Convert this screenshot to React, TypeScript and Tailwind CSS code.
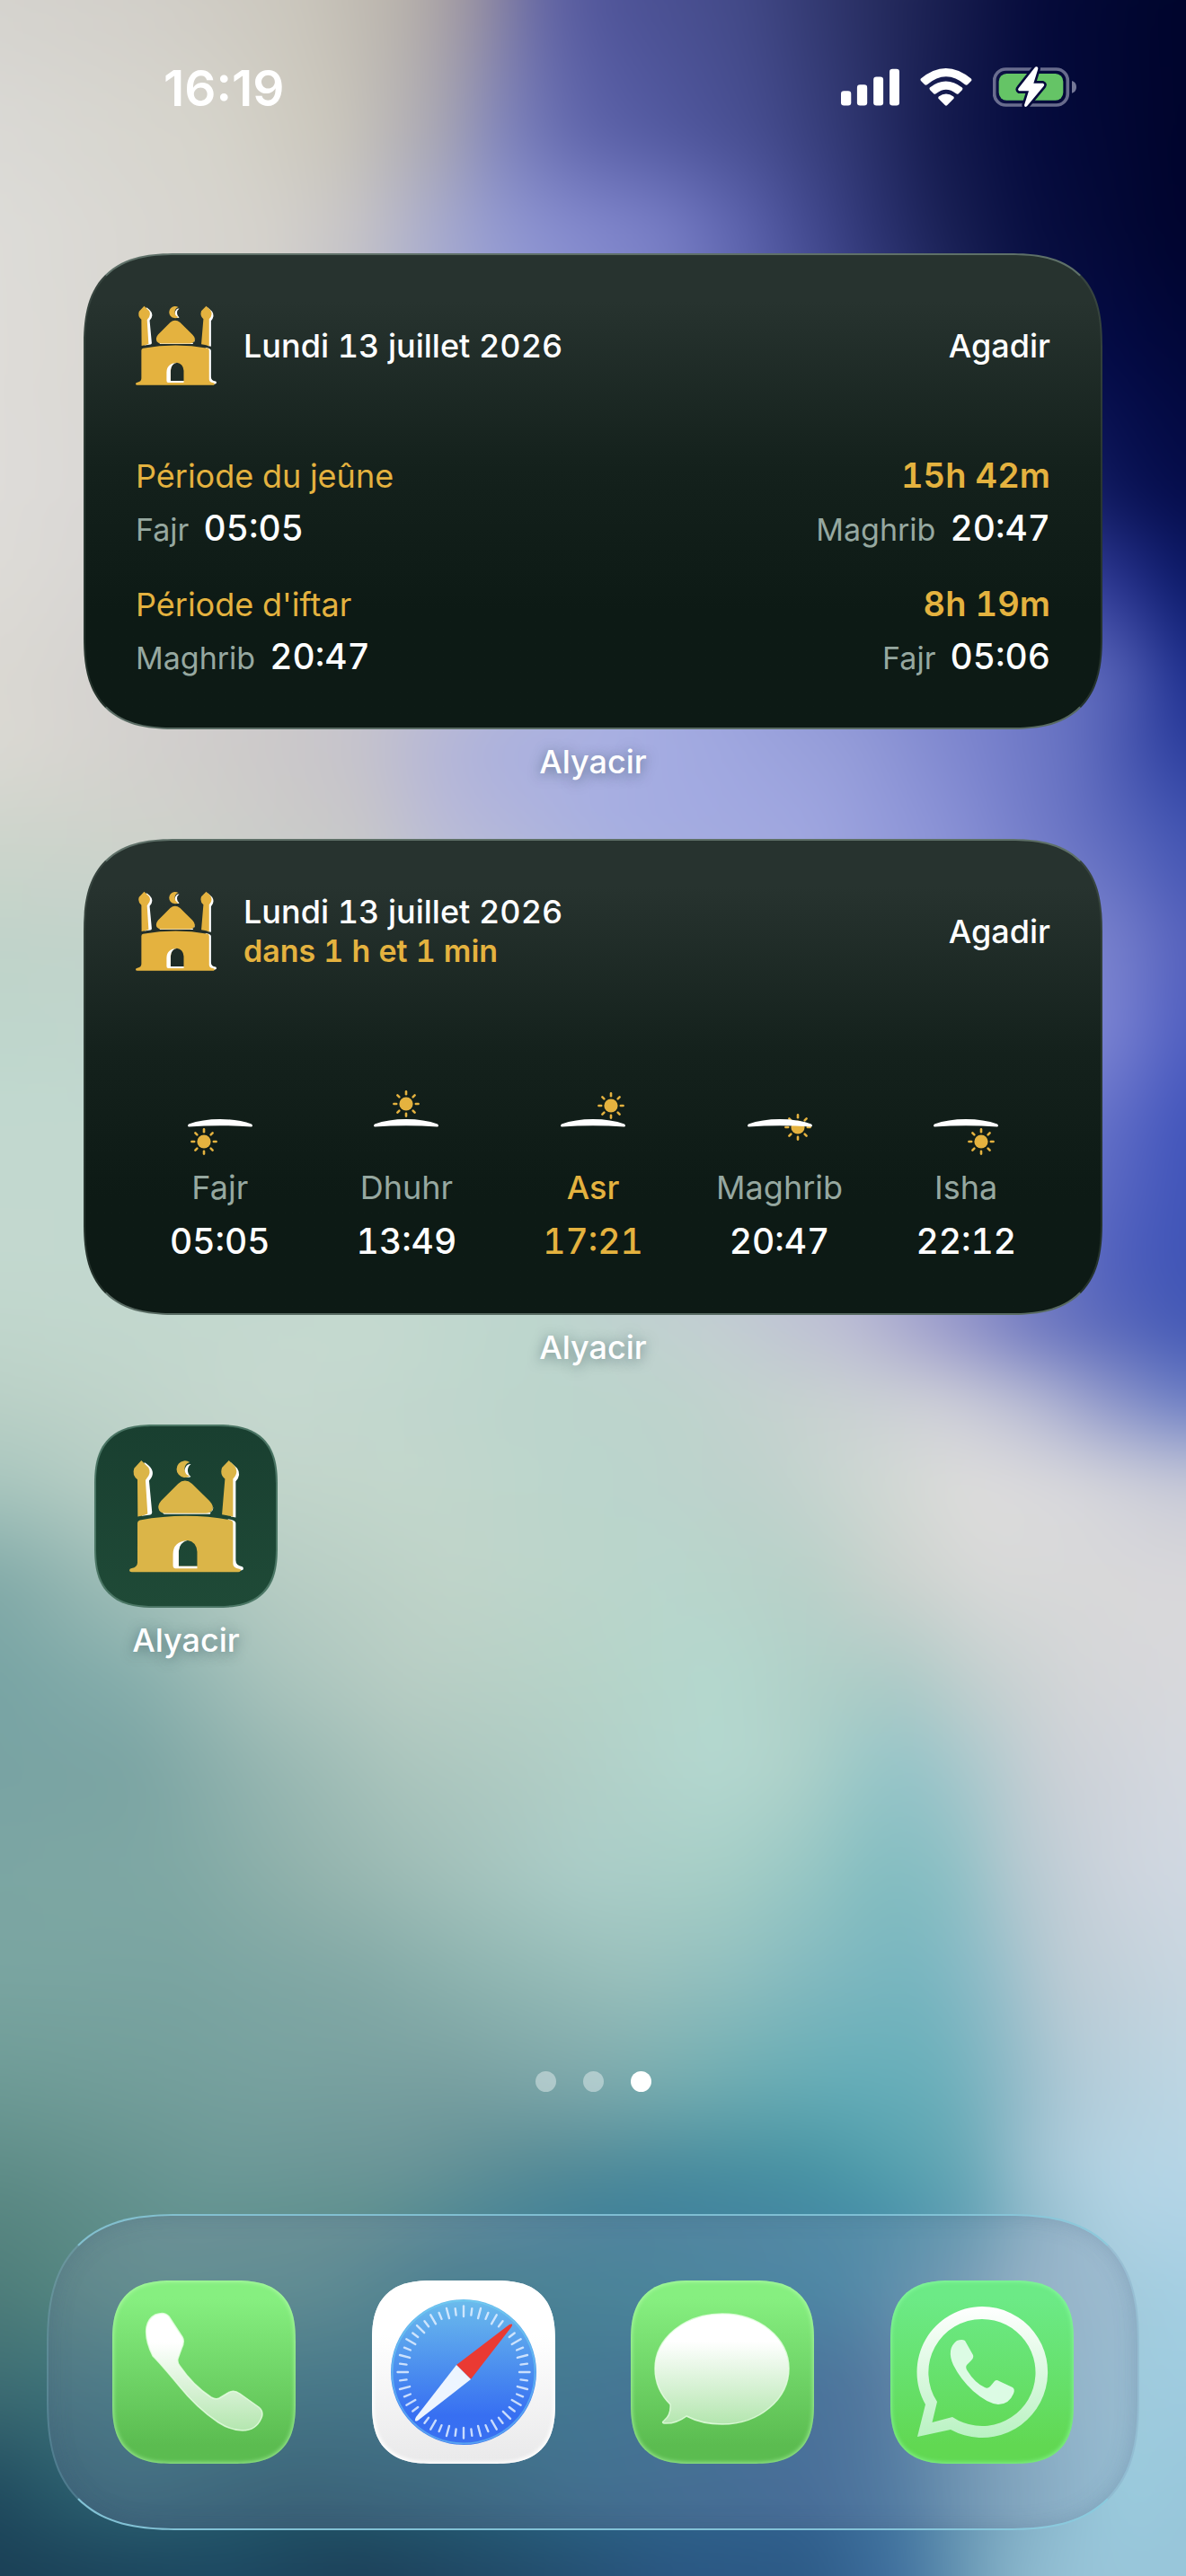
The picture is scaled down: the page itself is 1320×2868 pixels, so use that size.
import type { ReactNode } from "react";
import { clsx } from "clsx";

type Stop = [x: number, color: string];

interface MeshRow {
  y: number;
  stops: Stop[];
}

interface Prayer {
  name: string;
  time: string;
  sun: [number, number];
  isNext?: boolean;
}

interface Period {
  title: string;
  duration: string;
  from: { name: string; time: string };
  to: { name: string; time: string };
}

// Wallpaper colours, row by row. Neighbouring rows are blended into each other.
const meshRows: MeshRow[] = [
  { y: 0, stops: [[0, "#d5d3ce"], [165, "#d2cfc9"], [330, "#cbc7bd"], [450, "#b9b3ab"], [530, "#9a92a0"], [600, "#6668a6"], [670, "#50559a"], [825, "#434a88"], [990, "#242a5c"], [1155, "#050a3a"], [1320, "#00052c"]] },
  { y: 150, stops: [[0, "#dad9d5"], [240, "#d6d4cb"], [380, "#cac6bb"], [490, "#a8a6b2"], [560, "#7f84bd"], [650, "#5f65ab"], [740, "#5259a0"], [850, "#454c8e"], [950, "#2f3670"], [1040, "#161c50"], [1150, "#050b3e"], [1320, "#00042c"]] },
  { y: 260, stops: [[0, "#dddcd8"], [300, "#d5d2cc"], [400, "#c5c3c6"], [480, "#a9acce"], [560, "#9299d2"], [640, "#868cd0"], [740, "#7a80c8"], [820, "#6067b2"], [900, "#444b92"], [980, "#2b3270"], [1060, "#181f52"], [1150, "#080e40"], [1320, "#00042e"]] },
  { y: 400, stops: [[0, "#dedcd8"], [300, "#d5d2cc"], [600, "#9299d2"], [900, "#5259a0"], [1150, "#0a1248"], [1230, "#040b48"], [1320, "#02083a"]] },
  { y: 550, stops: [[0, "#dedcd9"], [400, "#d0cdcc"], [700, "#9299d2"], [1000, "#5c66b8"], [1235, "#0c165a"], [1320, "#050c4a"]] },
  { y: 650, stops: [[0, "#dddbd6"], [400, "#cbc8cc"], [700, "#a0a8e0"], [1100, "#5e69bc"], [1240, "#2a3592"], [1320, "#0c1a68"]] },
  { y: 750, stops: [[0, "#dad8d2"], [400, "#c8c5cb"], [700, "#a8afe1"], [1100, "#7881cc"], [1240, "#5864b8"], [1320, "#1c2d8c"]] },
  { y: 830, stops: [[0, "#dbd9d3"], [300, "#ccc9c9"], [400, "#c5c3cc"], [480, "#b6b7d6"], [560, "#aab0de"], [660, "#a9b0e2"], [800, "#a0a8e0"], [950, "#949cd8"], [1100, "#7881cc"], [1200, "#6470c0"], [1260, "#4554ae"], [1320, "#2a3c9c"]] },
  { y: 920, stops: [[0, "#cfd5cc"], [200, "#d0d1cb"], [400, "#c8c6c8"], [500, "#b8b9d8"], [680, "#a6aee2"], [900, "#9fa6e0"], [1050, "#8a92d6"], [1200, "#6671c2"], [1320, "#3f52b0"]] },
  { y: 1050, stops: [[0, "#c0d3c9"], [400, "#c6d3cf"], [900, "#a4abdc"], [1240, "#7780cc"], [1320, "#5561bc"]] },
  { y: 1150, stops: [[0, "#bed6cc"], [500, "#c6d3cf"], [1000, "#a4abdc"], [1235, "#7a82d2"], [1320, "#4f5ec0"]] },
  { y: 1250, stops: [[0, "#c2d9d0"], [600, "#c2d5cf"], [1000, "#a4abdc"], [1240, "#5f6cc6"], [1320, "#4154bb"]] },
  { y: 1400, stops: [[0, "#c3d8cf"], [600, "#bed5cd"], [900, "#bcc0d6"], [1100, "#8a90ca"], [1240, "#4f5fbd"], [1320, "#3f54b6"]] },
  { y: 1480, stops: [[0, "#c0d6cc"], [400, "#c6dad0"], [600, "#bcd6cd"], [800, "#c4cfd2"], [950, "#bcbcd4"], [1050, "#9b9bcb"], [1150, "#6f78c0"], [1320, "#4459b5"]] },
  { y: 1560, stops: [[0, "#bad0c6"], [300, "#c6d8cf"], [600, "#bcd5cc"], [750, "#bdd3cc"], [900, "#c8d2d0"], [1050, "#cfd0d8"], [1150, "#b8bbd4"], [1230, "#9098ca"], [1320, "#6a7cc4"]] },
  { y: 1650, stops: [[0, "#a9c6be"], [200, "#c0d3c9"], [450, "#c3d7cc"], [660, "#bad5cc"], [850, "#bfd1cc"], [1000, "#d3d9d5"], [1080, "#dedddc"], [1200, "#d8d8dc"], [1320, "#c8cad8"]] },
  { y: 1760, stops: [[0, "#82aaa8"], [120, "#9cbcb6"], [300, "#b6ccc3"], [500, "#c0d4c9"], [750, "#b8d6cc"], [900, "#b8d0c8"], [1000, "#ccd2ce"], [1100, "#d8d9d8"], [1320, "#d9d8da"]] },
  { y: 1870, stops: [[0, "#78a4a4"], [150, "#86aeac"], [300, "#a8c3bc"], [450, "#b8cdc4"], [650, "#b6d3c8"], [800, "#b4d8ce"], [900, "#b0d0c8"], [1000, "#accac6"], [1100, "#c6d0d0"], [1200, "#d4d6d8"], [1320, "#d8d8dc"]] },
  { y: 1970, stops: [[0, "#79a3a3"], [150, "#7ba4a3"], [300, "#96b6b1"], [450, "#abc5bd"], [600, "#b0ccc4"], [800, "#b4d8d0"], [880, "#b0d2ca"], [940, "#9fcac8"], [1010, "#93c3c8"], [1080, "#aac8cc"], [1170, "#cbd0d6"], [1320, "#d5d9e0"]] },
  { y: 2090, stops: [[0, "#7ca6a3"], [200, "#7fa8a4"], [350, "#93b3ad"], [500, "#a2c0ba"], [650, "#abcdc8"], [800, "#a6cec6"], [900, "#96c6c4"], [980, "#82bcc0"], [1060, "#8abfc4"], [1130, "#b4c8d0"], [1230, "#ccd3dc"], [1320, "#d0d8e2"]] },
  { y: 2200, stops: [[0, "#7aa5a1"], [200, "#7aa4a1"], [400, "#83a9a6"], [550, "#90b6b2"], [700, "#9ac0bc"], [820, "#90bfbf"], [920, "#80b8bf"], [1020, "#76b5bf"], [1100, "#90bcc8"], [1180, "#bccbd4"], [1320, "#c8d6e0"]] },
  { y: 2320, stops: [[0, "#6e9b96"], [300, "#77a19f"], [500, "#789fa0"], [650, "#7da8ab"], [750, "#76adb0"], [850, "#6aacb3"], [950, "#64adb8"], [1050, "#6aafba"], [1120, "#8cb8c6"], [1200, "#b2cbd8"], [1320, "#bdd6e3"]] },
  { y: 2420, stops: [[0, "#5e8c87"], [250, "#6d9997"], [450, "#6a9497"], [600, "#548994"], [750, "#488a9c"], [900, "#4692a2"], [1000, "#55a0ae"], [1080, "#68a8b6"], [1150, "#a0c2d2"], [1220, "#b2d2e2"], [1320, "#b5d5e6"]] },
  { y: 2470, stops: [[0, "#578580"], [200, "#649391"], [400, "#60918f"], [560, "#4c8698"], [680, "#40809a"], [850, "#4485a0"], [980, "#468fa8"], [1080, "#60a0b4"], [1150, "#90bbcc"], [1240, "#b0d2e3"], [1320, "#b0d3e6"]] },
  { y: 2550, stops: [[0, "#4e7d7a"], [160, "#5b9188"], [350, "#558d8c"], [500, "#397c88"], [700, "#388494"], [930, "#3d87a5"], [1060, "#6d9fb6"], [1140, "#9dc0d0"], [1240, "#a2cadb"], [1320, "#a4cfe3"]] },
  { y: 2650, stops: [[0, "#3f6e74"], [160, "#3c7a80"], [350, "#35737e"], [600, "#2e7488"], [800, "#326c92"], [950, "#3c6d97"], [1060, "#6c97b3"], [1140, "#8fb9cb"], [1240, "#a0cadb"], [1320, "#9fcce0"]] },
  { y: 2780, stops: [[0, "#1f4a5e"], [60, "#28596a"], [150, "#2e6474"], [330, "#235768"], [500, "#265e74"], [650, "#2d6787"], [900, "#356493"], [1000, "#4378a0"], [1060, "#6494b2"], [1130, "#80acc3"], [1240, "#9bccde"], [1320, "#98c6da"]] },
  { y: 2868, stops: [[0, "#1a3f55"], [250, "#1c4862"], [400, "#1c3f58"], [600, "#224c6c"], [750, "#2a5682"], [900, "#2c5a86"], [1000, "#4070a0"], [1050, "#5a8aab"], [1120, "#85b2c8"], [1200, "#98c4d8"], [1320, "#98c6da"]] },
];

const periods: Period[] = [
  {
    title: "Période du jeûne",
    duration: "15h 42m",
    from: { name: "Fajr", time: "05:05" },
    to: { name: "Maghrib", time: "20:47" },
  },
  {
    title: "Période d'iftar",
    duration: "8h 19m",
    from: { name: "Maghrib", time: "20:47" },
    to: { name: "Fajr", time: "05:06" },
  },
];

const prayers: Prayer[] = [
  { name: "Fajr", time: "05:05", sun: [22, 61] },
  { name: "Dhuhr", time: "13:49", sun: [40, 19] },
  { name: "Asr", time: "17:21", sun: [60, 21], isNext: true },
  { name: "Maghrib", time: "20:47", sun: [60, 45] },
  { name: "Isha", time: "22:12", sun: [57, 61] },
];

function Wallpaper() {
  return (
    <svg
      aria-hidden="true"
      className="absolute inset-0 -z-10 h-full w-full"
      preserveAspectRatio="none"
      viewBox="0 0 1320 2868"
    >
      <defs>
        <filter
          id="soften"
          colorInterpolationFilters="sRGB"
          filterUnits="userSpaceOnUse"
          x="-200"
          y="-200"
          width="1720"
          height="3268"
        >
          <feGaussianBlur stdDeviation="28" />
        </filter>
        {meshRows.map((row, i) => {
          const previous = meshRows[i - 1]?.y ?? -200;
          return (
            <g key={row.y}>
              <linearGradient id={`row-${i}`} gradientUnits="userSpaceOnUse" x1="0" x2="1320" y1="0" y2="0">
                {row.stops.map(([x, color]) => (
                  <stop key={x} offset={x / 1320} stopColor={color} />
                ))}
              </linearGradient>
              <linearGradient id={`fade-${i}`} gradientUnits="userSpaceOnUse" x1="0" x2="0" y1={previous} y2={row.y}>
                <stop offset="0" stopColor="#000" />
                <stop offset="1" stopColor="#fff" />
              </linearGradient>
              <mask id={`mask-${i}`} maskUnits="userSpaceOnUse" x="-200" y={previous} width="1720" height={3268 - previous}>
                <rect x="-200" y={previous} width="1720" height={3268 - previous} fill={`url(#fade-${i})`} />
              </mask>
            </g>
          );
        })}
      </defs>
      <g filter="url(#soften)">
        {meshRows.map((row, i) => {
          const top = i === 0 ? -200 : meshRows[i - 1].y;
          return (
            <rect
              key={row.y}
              x="-200"
              y={top}
              width="1720"
              height={3068 - top}
              fill={`url(#row-${i})`}
              mask={i === 0 ? undefined : `url(#mask-${i})`}
            />
          );
        })}
      </g>
    </svg>
  );
}

function MosqueShape() {
  return (
    <>
      <path d="M200 166L224 190Q234 208 218 226L214 232L221 345Q204 352 188 354L187 230Q168 214 176 192Z" />
      <path d="M493 166L512 184Q528 206 507 228L507 355Q488 350 470 347L480 228Q462 214 470 190Z" />
      <path d="M362 172A28 28 0 1 0 362 218A24 24 0 0 1 362 172Z" />
      <path d="M323 244Q346 224 370 244L428 301Q446 320 436 334Q430 343 416 343H280Q266 343 260 334Q252 318 266 301Z" />
      <path
        fillRule="evenodd"
        d="M187 376Q187 368 195 366Q350 338 500 366Q507 368 507 376V512Q507 526 528 529Q536 531 532 536Q530 540 524 540H168Q160 540 160 534Q160 528 168 527Q187 523 187 508ZM325 520H387V472Q384 438 355 434Q325 436 325 476Z"
      />
    </>
  );
}

function MosqueIcon({ className, gold }: { className: string; gold: string }) {
  return (
    <svg aria-hidden="true" className={className} viewBox="160 164 382 380">
      <g fill="#fff">
        <path d="M210 173Q214 174 226 184Q250 208 226 234L236 340Q236 346 230 348L202 352L196 240Z" />
        <path d="M500 173L521 192Q536 214 516 236V357L500 354Z" />
        <path d="M366 178A26 26 0 0 0 366 220Q358 224 350 222L344 200Q350 176 366 178Z" />
        <path d="M270 340H432Q440 336 441 322L430 346H276Z" />
        <path d="M490 362Q516 366 516 376V500Q516 518 538 522Q544 526 540 532L530 536L500 528Z" />
      </g>
      <g fill={gold}>
        <MosqueShape />
      </g>
      <path d="M355 434Q306 438 306 480V518Q306 527 314 528H387V520H325V470Q328 440 355 434Z" fill="#fff" />
    </svg>
  );
}

function SunPosition({ sun: [x, y] }: { sun: [number, number] }) {
  return (
    <svg aria-hidden="true" className="h-20 w-20" viewBox="0 0 80 80">
      <g transform={`translate(${x} ${y})`} fill="#e4b23f" stroke="#e4b23f" strokeWidth="2.6" strokeLinecap="round">
        <circle r="7.6" stroke="none" />
        {[0, 45, 90, 135, 180, 225, 270, 315].map((angle) => (
          <path key={angle} d="M0 -10.8V-13.6" transform={`rotate(${angle})`} />
        ))}
      </g>
      <path d="M5 41.500Q20 36 40 36T75 41.500Q77 43.500 75 44.500Q40 42 5 44.500Q3 43.500 5 41.500Z" fill="#fff" />
    </svg>
  );
}

function StatusBar() {
  return (
    <header className="flex h-[196px] items-start justify-between pt-[66px] pr-[122px] pl-[182px]">
      <time className="text-[55px] leading-[64px] font-semibold">16:19</time>
      <div className="flex items-center gap-[23px] pt-[8px]">
        <svg aria-label="Réseau" className="h-[42px] w-[65px]" viewBox="110 76 196 126" fill="#fff">
          <rect x="110" y="152" width="34" height="49" rx="10" />
          <rect x="164" y="131" width="34" height="70" rx="10" />
          <rect x="219" y="104" width="33" height="97" rx="10" />
          <rect x="273" y="78" width="33" height="123" rx="10" />
        </svg>
        <svg aria-label="Wi-Fi" className="h-[42px] w-[58px]" viewBox="374 75 174 127" fill="#fff">
          <path d="M376 110Q460 40 545 110Q549 114 545 118L533 130Q529 133 525 130Q461 76 397 130Q393 133 389 130L377 118Q373 114 376 110Z" />
          <path d="M406 140Q460 98 515 140Q519 144 515 148L502 161Q498 163 494 160Q461 134 428 160Q424 163 420 161L407 148Q403 144 406 140Z" />
          <path d="M436 170Q461 153 486 170Q489 174 486 178L465 199Q461 203 457 199L436 178Q433 174 436 170Z" />
        </svg>
        <svg aria-label="Batterie en charge" className="h-[46px] w-[93px]" viewBox="615 71 279 138">
          <rect x="620" y="80" width="245" height="120" rx="38" fill="none" stroke="#8a8ca8" strokeOpacity="0.75" strokeWidth="11" />
          <path d="M879 119Q894 124 894 140T879 160Z" fill="#8a8ca8" fillOpacity="0.85" />
          <rect x="635" y="95" width="215" height="89" rx="26" fill="#65c466" />
          <path
            d="M762 72Q768 74 765 82L751 127H782Q790 130 784 138L729 204Q721 210 720 200L735 153H703Q696 149 702 142L755 75Q758 71 762 72Z"
            fill="#fff"
            stroke="#060b3c"
            strokeWidth="16"
            strokeLinejoin="round"
            paintOrder="stroke"
          />
        </svg>
      </div>
    </header>
  );
}

function Widget({ children }: { children: ReactNode }) {
  return (
    <section className="flex flex-col">
      <div className="flex h-[530px] flex-col rounded-[104px] border-2 border-x-[#5c6f66]/30 border-y-[#6d8077]/80 bg-linear-to-b from-[#27332f] from-10% via-[#14211c] via-45% to-[#0d1a15] to-75% bg-origin-border px-[46px] pt-[56px] [corner-shape:superellipse(1.4)]">
        {children}
      </div>
      <AppLabel className="mt-[12px]">Alyacir</AppLabel>
    </section>
  );
}

function AppLabel({ children, className }: { children: ReactNode; className?: string }) {
  return (
    <p
      className={clsx(
        "text-center text-[36px] leading-[48px] font-medium text-white [text-shadow:0_2px_14px_rgba(30,60,70,0.55)]",
        className,
      )}
    >
      {children}
    </p>
  );
}

function WidgetHeader({ countdown }: { countdown?: string }) {
  return (
    <div className="flex items-center px-[10px]">
      <MosqueIcon className="h-[90px] w-[90px]" gold="#e4b23f" />
      <div className="ml-[30px] flex-1">
        <h2 className="text-[36px] leading-[44px] font-medium">Lundi 13 juillet 2026</h2>
        {countdown ? (
          <p className="text-[34px] leading-[44px] font-semibold text-[#e4b23f]">{countdown}</p>
        ) : null}
      </div>
      <p className="text-[36px] leading-[44px] font-medium">Agadir</p>
    </div>
  );
}

function PeriodTime({ name, time }: { name: string; time: string }) {
  return (
    <span className="flex items-baseline gap-[16px]">
      <span className="text-[34px] text-[#96a8a0]">{name}</span>
      <span className="text-[39px] font-medium">{time}</span>
    </span>
  );
}

function FastingWidget() {
  return (
    <Widget>
      <WidgetHeader />
      <div className="mt-[70px] flex flex-col gap-[24px] px-[10px]">
        {periods.map((period) => (
          <div key={period.title}>
            <div className="flex items-baseline justify-between leading-[58px] text-[#e4b23f]">
              <h3 className="text-[36px]">{period.title}</h3>
              <p className="text-[38px] font-semibold">{period.duration}</p>
            </div>
            <div className="flex items-baseline justify-between leading-[58px]">
              <PeriodTime {...period.from} />
              <PeriodTime {...period.to} />
            </div>
          </div>
        ))}
      </div>
    </Widget>
  );
}

function PrayerWidget() {
  return (
    <Widget>
      <WidgetHeader countdown="dans 1 h et 1 min" />
      <ul className="mt-[128px] grid grid-cols-5">
        {prayers.map((prayer) => (
          <li
            key={prayer.name}
            className={clsx("flex flex-col items-center", prayer.isNext ? "text-[#e4b23f]" : "text-white")}
          >
            <SunPosition sun={prayer.sun} />
            <span
              className={clsx(
                "mt-[2px] text-[36px] leading-[60px]",
                prayer.isNext ? "font-medium" : "text-[#96a8a0]",
              )}
            >
              {prayer.name}
            </span>
            <time className="text-[39px] leading-[60px] font-medium">{prayer.time}</time>
          </li>
        ))}
      </ul>
    </Widget>
  );
}

function DockIcon({ label, className, children }: { label: string; className: string; children: ReactNode }) {
  return (
    <button
      aria-label={label}
      className={clsx(
        "h-[204px] w-[204px] rounded-[68px] bg-linear-to-b [corner-shape:superellipse(1.4)]",
        className,
      )}
      type="button"
    >
      <svg aria-hidden="true" className="h-full w-full" viewBox="0 0 204 204">
        {children}
      </svg>
    </button>
  );
}

function Dock() {
  const ticks = Array.from({ length: 48 }, (_, i) => i);

  return (
    <nav className="mx-[52px] mb-[51px] flex items-center justify-between rounded-[148px] border-2 border-t-[#8accdf]/80 border-r-[#8accdf]/20 border-b-[#8accdf]/90 border-l-[#8accdf]/20 bg-[rgba(130,140,170,0.25)] px-[71px] py-[72px] shadow-[inset_0_0_24px_rgba(60,90,120,0.25)] [corner-shape:superellipse(1.4)]">
      <DockIcon
        label="Téléphone"
        className="from-[#86ef80] from-10% to-[#5bbc50] to-90% shadow-[inset_0_0_5px_1px_rgba(190,255,180,0.7)]"
      >
        <defs>
          <linearGradient id="glyph" x1="0" x2="0" y1="0" y2="1">
            <stop offset="0.25" stopColor="#fff" />
            <stop offset="1" stopColor="#b4e6af" />
          </linearGradient>
        </defs>
        <path
          d="M48 38Q58 34 63 40L78 63Q81 68 77 76L73 87Q72 91 75 95Q90 117 110 130Q115 133 119 131L129 125Q135 121 142 126L163 141Q169 146 166 153Q160 167 145 167Q132 167 118 158Q94 142 74 117Q54 93 45 84Q36 66 38 52Q40 42 48 38Z"
          fill="url(#glyph)"
          stroke="#e8ffe5"
          strokeOpacity="0.8"
          strokeWidth="1.500"
        />
      </DockIcon>
      <DockIcon label="Safari" className="from-white from-30% to-[#e9e9ea] shadow-[inset_0_0_4px_2px_#fff]">
        <defs>
          <linearGradient id="dial" x1="0" x2="0" y1="0" y2="1">
            <stop offset="0" stopColor="#6cbcec" />
            <stop offset="0.5" stopColor="#4a8cef" />
            <stop offset="0.8" stopColor="#376ff2" />
            <stop offset="1" stopColor="#3a70f0" />
          </linearGradient>
        </defs>
        <circle cx="102" cy="102" r="81" fill="url(#dial)" />
        <circle cx="102" cy="102" r="79.500" fill="none" stroke="#74d4f4" strokeOpacity="0.5" strokeWidth="2" />
        <g stroke="#e2efff" strokeOpacity="0.85" strokeWidth="2.400" strokeLinecap="round">
          {ticks.map((i) => (
            <path
              key={i}
              d={i % 2 === 0 ? "M102 28.500V40" : "M102 30.500V38"}
              transform={`rotate(${i * 7.5} 102 102)`}
            />
          ))}
        </g>
        <path d="M94 94L153 49Q158 47 155 52L110 110Z" fill="#ea3a33" />
        <path d="M94 94L110 110L51 156Q46 158 49 152Z" fill="#edf5ff" />
      </DockIcon>
      <DockIcon
        label="Messages"
        className="from-[#86ef80] from-10% to-[#5bbc50] to-90% shadow-[inset_0_0_5px_1px_rgba(190,255,180,0.7)]"
      >
        <path
          d="M102 37C143 37 176 64 176 98S143 160 102 160Q79 160 62 151Q50 160 37 159Q34 158 37 156Q45 150 44 138Q27 121 27 98C27 64 60 37 102 37Z"
          fill="url(#glyph)"
          stroke="#e8ffe5"
          strokeOpacity="0.8"
          strokeWidth="1.500"
        />
      </DockIcon>
      <DockIcon
        label="WhatsApp"
        className="from-[#6cea86] from-10% to-[#61d852] to-90% shadow-[inset_0_0_5px_1px_rgba(150,255,170,0.7)]"
      >
        <defs>
          <linearGradient id="ring" x1="0" x2="0" y1="0" y2="1">
            <stop offset="0" stopColor="#fff" />
            <stop offset="1" stopColor="#b9f2c2" />
          </linearGradient>
        </defs>
        <path
          fillRule="evenodd"
          d="M102 29A73 73 0 1 1 67 166L30 174L39 138A73 73 0 0 1 102 29ZM102 43A59.500 59.500 0 0 0 52 135L46.500 158L69 152A59.500 59.500 0 1 0 102 43Z"
          fill="url(#ring)"
        />
        <path
          d="M74 67Q80 65 83 67L92 83Q93 86 90 89L85 94Q83 97 86 101Q94 114 105 119Q108 121 111 118L116 112Q118 110 121 112L136 119Q139 121 137 126Q132 138 120 138Q108 137 92 123Q78 110 70 94Q62 76 74 67Z"
          fill="#dcfbe4"
        />
      </DockIcon>
    </nav>
  );
}

export default function App() {
  return (
    <div className="relative isolate flex min-h-screen flex-col overflow-hidden font-['Inter','Liberation_Sans',sans-serif] text-white">
      <Wallpaper />
      <StatusBar />
      <main className="flex flex-1 flex-col px-[93px] pt-[86px] tabular-nums">
        <div className="flex flex-col gap-[62px]">
          <FastingWidget />
          <PrayerWidget />
        </div>
        <button className="mt-[62px] ml-[12px] w-[204px]" type="button">
          <span className="flex h-[204px] w-[204px] items-center justify-center rounded-[68px] border-2 border-[#5f8a7a]/70 bg-linear-to-b from-[#193f30] to-[#1f4a37] [corner-shape:superellipse(1.4)]">
            <MosqueIcon className="h-[127px] w-[127px]" gold="#dbb548" />
          </span>
          <AppLabel className="mt-[12px]">Alyacir</AppLabel>
        </button>
      </main>
      <div className="mb-[136px] flex justify-center gap-[30px]">
        <button aria-label="Page 1" className="h-[23px] w-[23px] rounded-full bg-white/40" type="button" />
        <button aria-label="Page 2" className="h-[23px] w-[23px] rounded-full bg-white/40" type="button" />
        <button aria-label="Page 3" className="h-[23px] w-[23px] rounded-full bg-white" type="button" />
      </div>
      <Dock />
    </div>
  );
}
